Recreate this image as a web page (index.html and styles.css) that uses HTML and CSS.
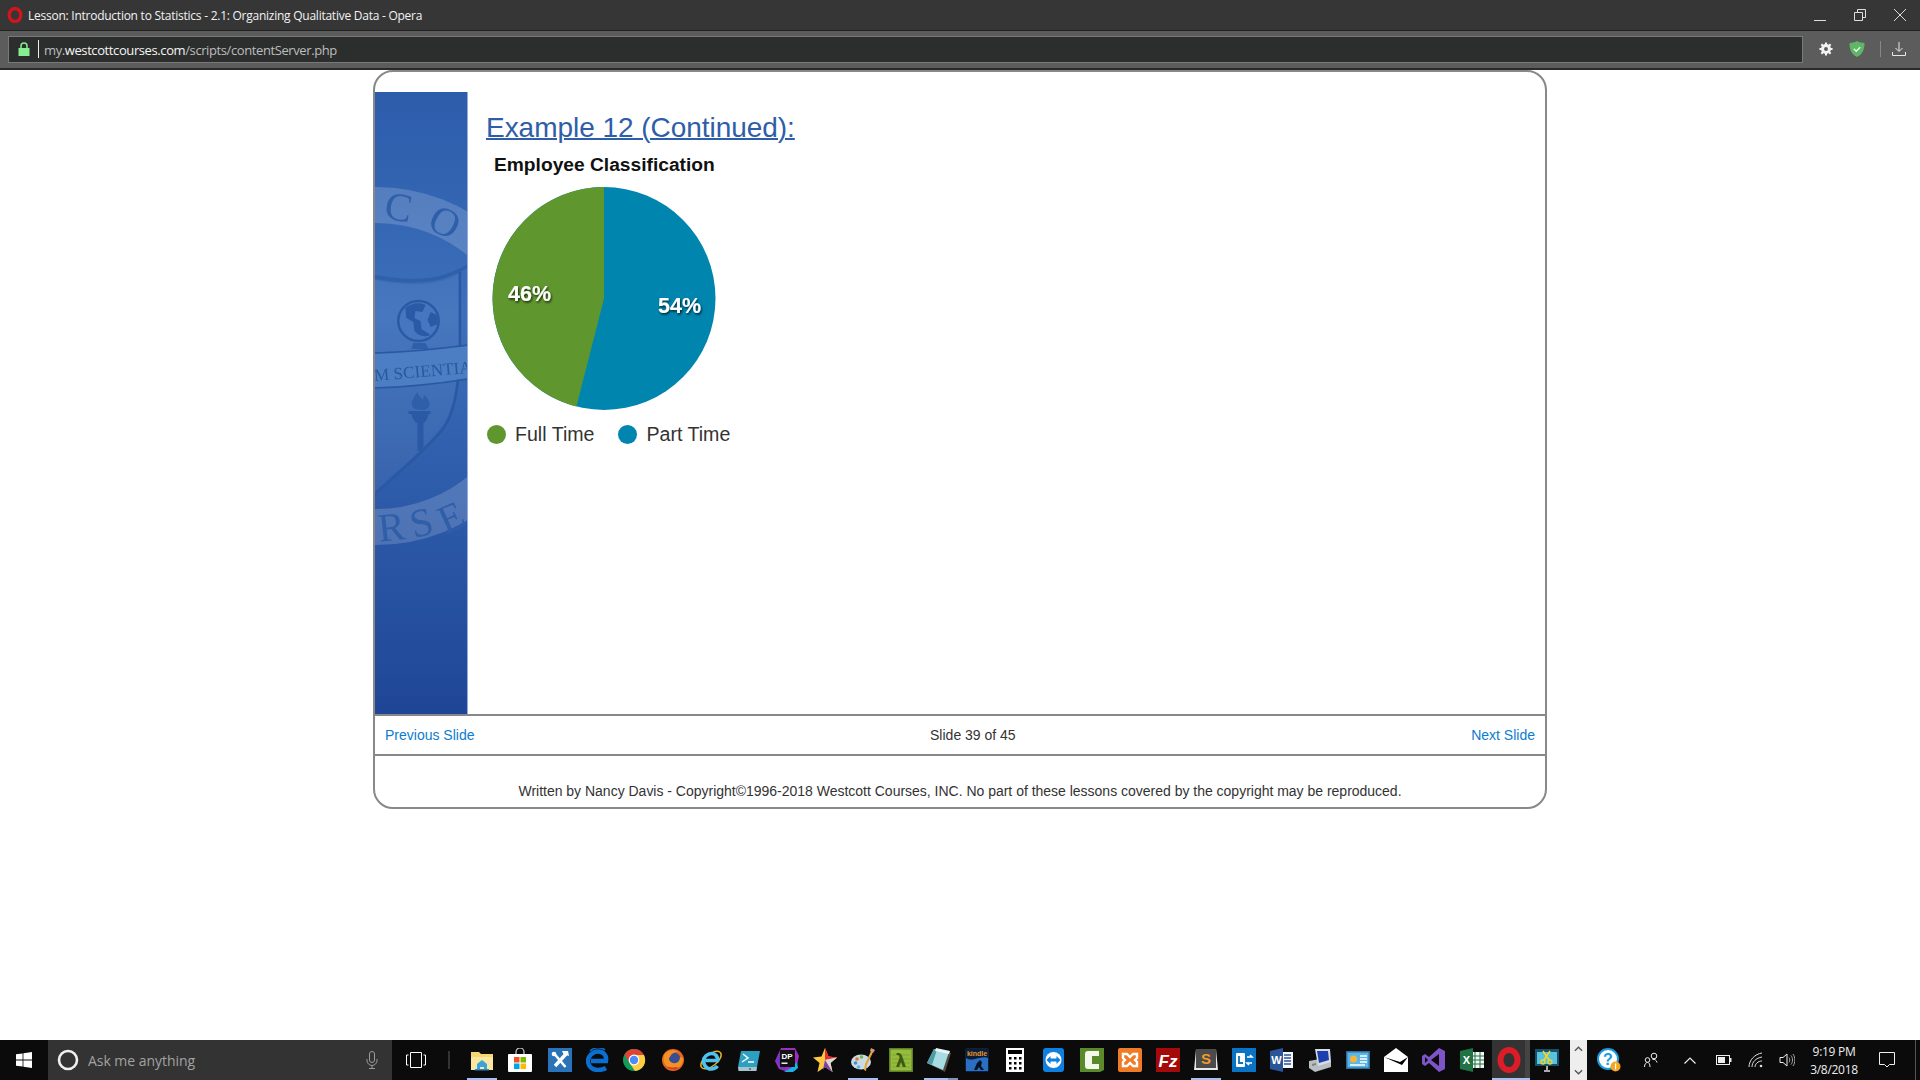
FILE: index.html
```html
<!DOCTYPE html>
<html lang="en">
<head>
<meta charset="utf-8">
<title>Lesson: Introduction to Statistics - 2.1: Organizing Qualitative Data - Opera</title>
<link rel="stylesheet" href="styles.css">
</head>
<body>
<header class="titlebar">
  <svg class="opera-mini" viewBox="0 0 16 16"><ellipse cx="8" cy="8" rx="5.800" ry="6.500" fill="none" stroke="#d3131d" stroke-width="3.400"/></svg>
  <span class="title">Lesson: Introduction to Statistics - 2.1: Organizing Qualitative Data - Opera</span>
  <div class="winctrls">
    <svg viewBox="0 0 12 12"><path d="M0 11.500H12" stroke="#ddd" fill="none"/></svg>
    <svg viewBox="0 0 12 12"><path d="M.5 3.500h8v8h-8zM3.500 3.500v-3h8v8h-3" stroke="#ddd" fill="none"/></svg>
    <svg viewBox="0 0 12 12"><path d="M0 0L12 12M12 0L0 12" stroke="#ddd" fill="none"/></svg>
  </div>
</header>
<div class="addressbar">
  <div class="urlbox">
    <svg class="lock" viewBox="0 0 12 14"><path d="M3 6V4a3 3 0 0 1 6 0v2" fill="none" stroke="#86ee90" stroke-width="1.500"/><rect x="0.500" y="6" width="11" height="8" fill="#86ee90"/></svg>
    <span class="urlsep"></span>
    <span class="url">my.<b>westcottcourses.com</b>/scripts/contentServer.php</span>
  </div>
  <div class="tools">
    <svg class="gear" viewBox="0 0 16 16"><circle cx="8" cy="8" r="4.200" fill="none" stroke="#f2f2f2" stroke-width="3"/><path d="M8 .5v15M.5 8h15M2.700 2.700l10.600 10.600M13.300 2.700L2.700 13.300" stroke="#f2f2f2" stroke-width="2.400"/><circle cx="8" cy="8" r="2.200" fill="#5c5c5c"/></svg>
    <svg class="shield" viewBox="0 0 16 16"><path d="M8 0C5.500 1.500 3 1.800.5 2c0 6 1.500 11 7.500 14 6-3 7.500-8 7.500-14C13 1.800 10.500 1.500 8 0z" fill="#5fb667"/><path d="M4.800 7.800l2.400 2.400 4-4" stroke="#eafbe9" stroke-width="1.400" fill="none"/></svg>
    <span class="toolsep"></span>
    <svg class="dl" viewBox="0 0 14 14"><path d="M7 0v9M3.500 6l3.500 3.500L10.500 6M.5 10v3.500h13V10" fill="none" stroke="#e8e8e8"/></svg>
  </div>
</div>

<main class="page">
  <section class="card">
    <div class="body">
      <aside class="side">
        <svg class="seal" viewBox="0 0 92 622" preserveAspectRatio="none">
          <defs>
            <linearGradient id="sideg" x1="0" y1="0" x2="0" y2="1">
              <stop offset="0" stop-color="#2d5cab"/>
              <stop offset=".14" stop-color="#3163b1"/>
              <stop offset=".36" stop-color="#3d70ba"/>
              <stop offset=".62" stop-color="#2e5dab"/>
              <stop offset="1" stop-color="#1f4696"/>
            </linearGradient>
            <clipPath id="sideclip"><rect width="92" height="622"/></clipPath>
            <filter id="soft" x="-5%" y="-5%" width="110%" height="110%"><feGaussianBlur stdDeviation=".45"/></filter>
          </defs>
          <rect width="92" height="622" fill="url(#sideg)"/>
          <g clip-path="url(#sideclip)"><g filter="url(#soft)">
            <circle cx="1" cy="274" r="161" fill="none" stroke="#fff" stroke-opacity=".17" stroke-width="36"/>
            <g class="sealtxt">
              <text x="10" y="128" transform="rotate(10 20 115)">C</text>
              <text x="54" y="140" transform="rotate(28 62 130)">O</text>
              <text x="3" y="449" transform="rotate(-6 12 436)">R</text>
              <text x="35" y="445" transform="rotate(-14 42 432)">S</text>
              <text x="63" y="440" transform="rotate(-24 72 426)">E</text>
            </g>
            <path d="M0 183c28 5 55 5 70-1 8-3 15-6 22-10v4c-8 4-15 7-22 10-16 6-44 6-70 1z" fill="#2f5ea8" fill-opacity=".85"/>
            <path d="M0 188c28 6 55 6 72-1l11-5v76c-2 38-6 62-16 75C52 355 22 378 0 400z" fill="#fff" fill-opacity=".05"/>
            <path d="M84 180v80c-1 36-6 62-16 76C52 357 24 380 0 402" fill="none" stroke="#2a58a3" stroke-width="2.500"/>
            <path d="M0 262c32-1 62-4 92-8v32c-30 5-60 8-92 9z" fill="#4b7ec3"/>
            <path d="M0 261c32-1 62-4 92-8M0 296c32-1 62-4 92-9" fill="none" stroke="#2a58a3" stroke-width="1.600"/>
            <text class="motto" x="-1" y="285" transform="rotate(-5 46 280)">M SCIENTIAL</text>
            <circle cx="43" cy="229" r="20" fill="#4476bf" stroke="#2c5aa5" stroke-width="2.500"/>
            <path d="M30 216c6-5 14-6 20-3l-3 7-7-1-1 7 6 3 1 8 9 6c-7 3-13 0-16-4l-1-9-7-4zM55 220l6 3 1 9-7 3-3-7z" fill="#2c5aa5"/>
            <path d="M38 251h12l3 6H36z" fill="#2f5ea8"/>
            <path d="M42 300c-3 5-7 9-5 14 1 3 5 4 9 4s8-2 8-6c0-4-3-5-4-9-2 2-3 3-3 5-1-2-4-4-5-8z" fill="#2f5ea8"/>
            <path d="M33 319h22v3h-2c-1 5-3 8-5 9v28h-6v-28c-3-1-5-4-6-9h-3z" fill="#2c5aa5"/>
          </g></g>
          <rect x="91" width="1" height="622" fill="#94aedb"/>
        </svg>
      </aside>
      <article class="content">
        <h1 class="heading">Example 12 (Continued):</h1>
        <figure class="chart">
          <figcaption class="chart-title">Employee Classification</figcaption>
          <svg class="pie" viewBox="0 0 224 226">
            <defs>
              <filter id="tshadow" x="-20%" y="-20%" width="140%" height="140%"><feDropShadow dx="1" dy="1.500" stdDeviation="1" flood-color="#000" flood-opacity=".75"/></filter>
            </defs>
            <circle cx="112" cy="113.500" r="111.500" fill="#0085af"/>
            <path d="M112 113.500V2A111.500 111.500 0 0 0 84.400 221.500z" fill="#5f962d"/>
            <text class="pct" x="16" y="116" filter="url(#tshadow)">46%</text>
            <text class="pct" x="166" y="128" filter="url(#tshadow)">54%</text>
          </svg>
          <figcaption class="legend">
            <span class="legend-item"><i class="dot dot-green"></i>Full Time</span>
            <span class="legend-item"><i class="dot dot-blue"></i>Part Time</span>
          </figcaption>
        </figure>
      </article>
    </div>
    <nav class="slidenav">
      <a class="navlink" href="#">Previous Slide</a>
      <span>Slide 39 of 45</span>
      <a class="navlink" href="#">Next Slide</a>
    </nav>
    <footer class="copyright">Written by Nancy Davis - Copyright©1996-2018 Westcott Courses, INC. No part of these lessons covered by the copyright may be reproduced.</footer>
  </section>
</main>

<div class="taskbar">
  <div class="start">
    <svg viewBox="0 0 16 16"><path d="M0 2.300L6.600 1.400V7.600H0zM7.400 1.300L16 0V7.600H7.400zM0 8.400H6.600V14.600L0 13.700zM7.400 8.400H16V16L7.400 14.700z" fill="#fff"/></svg>
  </div>
  <div class="search">
    <svg class="cortana" viewBox="0 0 22 22"><circle cx="11" cy="11" r="9" fill="none" stroke="#f0f0f0" stroke-width="2.600"/></svg>
    <span class="ask">Ask me anything</span>
    <svg class="mic" viewBox="0 0 12 18"><rect x="3.500" y=".5" width="5" height="11" rx="2.500" fill="none" stroke="#9a9a9a"/><path d="M1 8v1.500a5 5 0 0 0 10 0V8M6 14.500V17M3 17.500h6" fill="none" stroke="#9a9a9a"/></svg>
  </div>
  <div class="taskview">
    <svg class="tv" viewBox="0 0 20 16"><path d="M4.500 .5h11v15h-11zM2.500 3H.5v10h2M17.500 3h2v10h-2" fill="none" stroke="#fff"/></svg>
    <span class="tbsep"></span>
  </div>
  <div class="apps">
    <div class="app on"><svg viewBox="0 0 24 24"><path d="M1 4h8l2 2h12v16H1z" fill="#f7d774"/><path d="M1 9h22v13H1z" fill="#fbe7a0"/><path d="M7 16l5-4 5 4v6h-3v-3h-4v3H7z" fill="#3aa3dc"/><path d="M5 21h14v1.500H5z" fill="#2a86c4"/></svg></div>
    <div class="app"><svg viewBox="0 0 24 24"><path d="M8 7V4a4 4 0 0 1 8 0v3" fill="none" stroke="#ccc" stroke-width="1.200"/><rect y="6" width="24" height="18" rx="1" fill="#fff"/><rect x="6" y="9" width="5.500" height="5.500" fill="#f25022"/><rect x="12.500" y="9" width="5.500" height="5.500" fill="#7fba00"/><rect x="6" y="15.500" width="5.500" height="5.500" fill="#00a4ef"/><rect x="12.500" y="15.500" width="5.500" height="5.500" fill="#ffb900"/></svg></div>
    <div class="app nudge-r"><svg viewBox="0 0 24 24"><rect width="24" height="24" fill="#2a73b8"/><path d="M6.500 6l11 13" stroke="#fff" stroke-width="2.600"/><path d="M18 6L7 18" stroke="#fff" stroke-width="3.400"/><circle cx="6" cy="6" r="2.300" fill="#fff"/><path d="M14 3l6 0 1 5-3-1-2 0z" fill="#fff"/></svg></div>
    <div class="app nudge-r"><svg viewBox="0 0 24 24"><path d="M5 13h15c1-6-3-9.500-8-9.500S2 8 2 13c0 6 5 9 10 9 3 0 6-.8 8-2" fill="none" stroke="#0a6fd1" stroke-width="4.400"/><path d="M4 3C8-1 15-1 19 2" fill="none" stroke="#0a6fd1" stroke-width="1.500"/></svg></div>
    <div class="app"><svg viewBox="0 0 24 24"><circle cx="12" cy="12" r="11" fill="#0f9d58"/><path d="M12 7h10a11 11 0 0 1-9 16L7.500 15z" fill="#ffcd40"/><path d="M12 1A11 11 0 0 0 2.500 6.500L7.500 15 12 7h10A11 11 0 0 0 12 1z" fill="#db4437"/><circle cx="12" cy="12" r="5.400" fill="#fff"/><circle cx="12" cy="12" r="4.200" fill="#4c8bf5"/></svg></div>
    <div class="app"><svg viewBox="0 0 24 24"><circle cx="12" cy="12" r="11" fill="#e8651d"/><circle cx="13" cy="11" r="6.500" fill="#3a4d93"/><path d="M3 7c3-5 10-6 14-3-4 0-7 2-8 5-2 1-1 5 3 6 4 1 7-2 7-6l3 1c0 7-4 11-10 11S1 15 3 7z" fill="#f29224"/><path d="M4 18c3 3 9 5 14 2l-3-1c-4 1-8 0-11-1z" fill="#d8402a"/></svg></div>
    <div class="app"><svg viewBox="0 0 24 24"><ellipse cx="12" cy="12" rx="12" ry="6" transform="rotate(-38 12 12)" fill="none" stroke="#e5b320" stroke-width="1.500"/><path d="M6.500 12.500h12c.5-4-2-7-6-7S4.500 9 4.500 13s3 8 7.500 8c3 0 5-1 6.500-3" fill="none" stroke="#4fc3f0" stroke-width="3.600"/></svg></div>
    <div class="app"><svg viewBox="0 0 24 24"><path d="M4 3h19l-3 16H1z" fill="#2d9fc0"/><path d="M1 19h19l-.5 4H1.500z" fill="#a7c4cc"/><path d="M6 6l5 4-6 4M11 14h6" fill="none" stroke="#fff" stroke-width="1.400"/><circle cx="13" cy="21" r="1" fill="#45666f"/></svg></div>
    <div class="app"><svg viewBox="0 0 24 24"><path d="M6 0h14l4 8-3 14-8 2-9-3-4-8z" fill="#9c2fc0"/><path d="M1 12l6-8 4 18-5-2z" fill="#6a38c8"/><path d="M16 20l6-6 1 6-5 4-9 0z" fill="#17b3e8"/><rect x="5" y="2" width="15" height="17" fill="#111"/><text class="dptxt" x="6.500" y="10.500">DP</text><rect x="6.500" y="14.500" width="6" height="1.400" fill="#fff"/></svg></div>
    <div class="app"><svg viewBox="0 0 24 24"><path d="M12 0l3.500 8.500L24 9.500l-6.500 5.500L19.500 24 12 19l-7.500 5 2-9L0 9.500 8.500 8.500z" fill="#ffc83d"/><path d="M12 0l3.500 8.500L24 9.500 12 12z" fill="#e9293d"/><path d="M24 9.500l-6.500 5.500L19.500 24 12 12z" fill="#d8d8d8"/><path d="M19.500 24L12 19l-2 3 2-10z" fill="#7a3fb0"/></svg></div>
    <div class="app on"><svg viewBox="0 0 24 24"><ellipse cx="10" cy="14" rx="10" ry="7.500" fill="#c9dbe6"/><circle cx="6" cy="11" r="1.800" fill="#e8702a"/><circle cx="10.500" cy="9" r="1.800" fill="#74b74a"/><circle cx="4.500" cy="15" r="1.800" fill="#3d8fd1"/><circle cx="7.500" cy="19" r="1.800" fill="#5db3dd"/><path d="M21 1l2 1-7 15-1 6-2-1 1-6z" fill="#e2a63a"/><path d="M20 0l4 2-2 3-3-2z" fill="#d89a78"/></svg></div>
    <div class="app"><svg viewBox="0 0 24 24"><rect width="24" height="24" fill="#5e7f24"/><rect x="1.500" y="1.500" width="21" height="21" fill="#95bd3c"/><path d="M3 7h18M3 11h18M3 15h18M3 19h18" stroke="#82a833" stroke-width="1.200"/><text class="lam" x="12" y="19" text-anchor="middle">λ</text></svg></div>
    <div class="app on2"><svg viewBox="0 0 24 24"><path d="M8 1l16 4-6 19-16-8z" fill="#6f6a5b" opacity=".7"/><path d="M7 1l15 3-6 18L0 15z" fill="#a7dde2"/><path d="M0 15L7 1l3 .7L5 17z" fill="#4f9aa6"/><path d="M9 0l14 3-1 3L8 3z" fill="#e8f4f6"/></svg></div>
    <div class="app"><svg viewBox="0 0 24 24"><rect width="24" height="24" rx="2" fill="#0b2140"/><rect x="1" y="1" width="22" height="22" rx="1" fill="#0a1c36"/><path d="M1 10c5 3 8 1 13 0s7-1 9 0v13H1z" fill="#2b6fc4"/><path d="M12 15l3-3 2 2-1 4 3 4h-3l-2-3-2 3H9z" fill="#061222"/><text class="kindle" x="12" y="7.500" text-anchor="middle">kindle</text></svg></div>
    <div class="app"><svg viewBox="0 0 24 24"><rect x="3" width="18" height="24" fill="#fff"/><rect x="5" y="2" width="14" height="4" fill="#000"/><g fill="#000"><rect x="6" y="9" width="2.500" height="2.500"/><rect x="11" y="9" width="2.500" height="2.500"/><rect x="16" y="9" width="2.500" height="2.500"/><rect x="6" y="14" width="2.500" height="2.500"/><rect x="11" y="14" width="2.500" height="2.500"/><rect x="16" y="14" width="2.500" height="2.500"/><rect x="6" y="19" width="2.500" height="2.500"/><rect x="11" y="19" width="2.500" height="2.500"/><rect x="16" y="19" width="2.500" height="2.500"/></g></svg></div>
    <div class="app"><svg viewBox="0 0 24 24"><rect x="2" width="21" height="24" rx="3" fill="#0f7fe0"/><circle cx="12.500" cy="12" r="8" fill="#fff"/><path d="M5.500 12l4-4v2.500h6V8l4 4-4 4v-2.500h-6V16z" fill="#0f7fe0"/></svg></div>
    <div class="app"><svg viewBox="0 0 24 24"><path d="M0 0h24v22l-4 2H0z" fill="#5a8a2a"/><path d="M8 3h11v5h-7v8h7v5H8q-3 0-3-3V6q0-3 3-3z" fill="#f4f8ea"/></svg></div>
    <div class="app"><svg viewBox="0 0 24 24"><rect width="24" height="24" rx="2" fill="#ef7b26"/><path d="M5 6h4l3 3 3-3h4v4l-2 2 2 2v4h-4l-3-3-3 3H5v-4l2-2-2-2z" fill="none" stroke="#fff" stroke-width="2.400"/></svg></div>
    <div class="app"><svg viewBox="0 0 24 24"><rect width="24" height="24" fill="#a50a0a"/><text class="fz" x="12" y="19" text-anchor="middle">Fz</text></svg></div>
    <div class="app on"><svg viewBox="0 0 24 24"><path d="M2 1h20l2 21H0z" fill="#e8e8e8"/><rect x="2" y="1" width="20" height="19" fill="#4b4b4b"/><text class="subl" x="12" y="16" text-anchor="middle">S</text></svg></div>
    <div class="app"><svg viewBox="0 0 24 24"><rect width="24" height="24" fill="#0a73c4"/><rect x="4" y="5" width="9" height="14" rx="1" fill="#fff"/><path d="M7 8v7h4" fill="none" stroke="#0a73c4" stroke-width="1.800"/><path d="M15 9h5l-2-2M20 15h-5l2 2" fill="none" stroke="#fff" stroke-width="1.600"/></svg></div>
    <div class="app"><svg viewBox="0 0 24 24"><path d="M10 4h13v16H10z" fill="#f5f7fb"/><path d="M14 7h7M14 10h7M14 13h7M14 16h7" stroke="#2a5699" stroke-width="1.300"/><path d="M0 3l13-3v24L0 21z" fill="#2a5699"/><text class="wd" x="6.500" y="16" text-anchor="middle">W</text></svg></div>
    <div class="app"><svg viewBox="0 0 24 24"><path d="M1 13l16-3 6 4v5L7 24l-6-4z" fill="#b9bec2"/><path d="M7 1l15 0 1 13-13 4z" fill="#d8dde2"/><path d="M9 3h11l1 9-10 3z" fill="#1c3fb0"/><path d="M4 16l4-1v2l-4 1z" fill="#7c8288"/></svg></div>
    <div class="app"><svg viewBox="0 0 24 24"><rect y="3" width="24" height="18" fill="#2d6f9e"/><rect x="1.500" y="4.500" width="21" height="15" fill="#5bb5e8"/><circle cx="7.500" cy="11" r="3.500" fill="#f6b33c"/><path d="M14 8h7M14 11h7M14 14h7M4 17h15" stroke="#fff" stroke-width="1.300"/></svg></div>
    <div class="app"><svg viewBox="0 0 24 24"><path d="M0 9L12 0l12 9v15H0z" fill="#fff"/><path d="M0 9l16 5 8-5-6 8z" fill="#000"/></svg></div>
    <div class="app"><svg viewBox="0 0 24 24"><path d="M17 0l6 3v18l-6 3-10-9-4 3-3-2V8l3-2 4 3z" fill="#7d55c7"/><path d="M17 6v12l-8-6z" fill="#0b0b0b"/><path d="M3 9v6l3-3z" fill="#0b0b0b"/></svg></div>
    <div class="app"><svg viewBox="0 0 24 24"><path d="M10 4h14v16H10z" fill="#f3f7f3"/><path d="M15 4v16M20 4v16M10 8h14M10 12h14M10 16h14" stroke="#217346" stroke-width="1"/><path d="M0 3l13-3v24L0 21z" fill="#217346"/><text class="wd" x="6.500" y="16" text-anchor="middle">X</text></svg></div>
    <div class="app opera nudge-l"><svg viewBox="0 0 24 24"><ellipse cx="12" cy="12" rx="8.500" ry="10" fill="none" stroke="#dc1c26" stroke-width="6"/></svg></div>
    <div class="app nudge-l"><svg viewBox="0 0 24 24"><rect y="1" width="24" height="17" fill="#15506c"/><rect x="2" y="4" width="20" height="12" fill="#58c2e3"/><path d="M9 23h6M12 18v5" stroke="#aaa" stroke-width="2"/><path d="M8 3l6 9M15 3l-6 9" stroke="#f7d51d" stroke-width="1.600"/><circle cx="8" cy="14" r="2" fill="none" stroke="#f7d51d" stroke-width="1.300"/><circle cx="15" cy="14" r="2" fill="none" stroke="#f7d51d" stroke-width="1.300"/></svg></div>
  </div>
  <div class="scroller">
    <svg viewBox="0 0 10 6"><path d="M1 5l4-4 4 4" fill="none" stroke="#555" stroke-width="1.500"/></svg>
    <svg viewBox="0 0 10 6"><path d="M1 1l4 4 4-4" fill="none" stroke="#555" stroke-width="1.500"/></svg>
  </div>
  <div class="tray">
    <div class="tray-cell"><svg class="help" viewBox="0 0 24 24"><circle cx="11" cy="11" r="10" fill="#fff" stroke="#1a9be0" stroke-width="2"/><text class="qm" x="11" y="17" text-anchor="middle">?</text><circle cx="18.500" cy="18.500" r="5" fill="#f5a623"/><rect x="18" y="15.500" width="1.200" height="6" fill="#fff"/></svg></div>
    <div class="tray-cell"><svg class="people" viewBox="0 0 16 16"><circle cx="11" cy="4" r="2.800" fill="none" stroke="#eee"/><circle cx="4.500" cy="8" r="2.300" fill="none" stroke="#eee"/><path d="M7 15c0-3-1-4.500-2.500-4.500S1.500 12 1.500 15M9.500 7.500c2-.5 4 .5 4.500 3" fill="none" stroke="#eee"/></svg></div>
    <div class="tray-cell"><svg class="chev" viewBox="0 0 12 7"><path d="M.5 6.500L6 1l5.500 5.500" fill="none" stroke="#eee" stroke-width="1.200"/></svg></div>
    <div class="tray-cell"><svg class="batt" viewBox="0 0 16 10"><rect x=".5" y=".5" width="13" height="9" fill="none" stroke="#eee"/><rect x="2" y="2" width="7" height="6" fill="#eee"/><rect x="14" y="3" width="1.500" height="4" fill="#eee"/></svg></div>
    <div class="tray-cell"><svg class="wifi" viewBox="0 0 16 16"><path d="M1 15C1 8 7 2 14 1M4 15c0-5 4-9 10-10M7 15c0-3 3-6 7-6" fill="none" stroke="#ddd"/><circle cx="13" cy="14" r="1.300" fill="#ddd"/></svg></div>
    <div class="tray-cell"><svg class="vol" viewBox="0 0 16 16"><path d="M1 5.500h3L8 2v12L4 10.500H1z" fill="none" stroke="#eee"/><path d="M10 5.500c1 1.500 1 3.500 0 5M12 3.500c2 2.500 2 6.500 0 9M14 2c2.500 3.500 2.500 8.500 0 12" fill="none" stroke="#aaa"/></svg></div>
    <div class="clock"><span>9:19 PM</span><span>3/8/2018</span></div>
    <div class="tray-cell"><svg class="notif" viewBox="0 0 16 16"><path d="M.5 .5h15v12h-5L8 15l-2.500-2.500h-5z" fill="none" stroke="#eee"/></svg></div>
    <div class="showdesk"></div>
  </div>
</div>
</body>
</html>
```
FILE: styles.css
```css
* { box-sizing: border-box; }
html, body { margin: 0; height: 100%; }
body {
  display: flex;
  flex-direction: column;
  height: 1080px;
  overflow: hidden;
  background: #fff;
  font-family: "Liberation Sans", Arial, sans-serif;
  color: #333;
}
svg { display: block; }

/* Browser chrome */
.titlebar {
  height: 31px;
  flex: none;
  display: flex;
  align-items: center;
  padding-left: 7px;
  background: #363636;
  border-bottom: 1px solid #222;
}
.opera-mini { width: 16px; height: 16px; margin-right: 5px; }
.title {
  font: 12px "Open Sans", sans-serif;
  letter-spacing: -.25px;
  color: #f2f2f2;
  white-space: nowrap;
}
.winctrls {
  margin-left: auto;
  display: flex;
  gap: 28px;
  padding-right: 14px;
}
.winctrls svg { width: 12px; height: 12px; margin-top: -1px; }

.addressbar {
  height: 39px;
  flex: none;
  display: flex;
  align-items: center;
  padding: 0 0 1px 8px;
  background: #5c5c5c;
  border-bottom: 2px solid #2a2a2a;
}
.urlbox {
  width: 1795px;
  height: 27px;
  display: flex;
  align-items: center;
  padding-left: 9px;
  background: #2c2e2d;
  border: 1px solid #797979;
}
.lock { width: 12px; height: 14px; }
.urlsep { width: 1px; height: 18px; background: #eee; margin: 0 5px 0 8px; }
.url {
  margin-top: 2px;
  font: 13px "Open Sans", sans-serif;
  letter-spacing: -.4px;
  color: #bdbdbd;
  white-space: nowrap;
}
.url b { font-weight: 400; color: #f4f4f4; }
.tools {
  display: flex;
  align-items: center;
  margin-left: 16px;
}
.gear { width: 14px; height: 14px; }
.shield { width: 16px; height: 16px; margin-left: 16px; }
.toolsep { width: 1px; height: 16px; background: #888; margin: 0 11px 0 15px; }
.dl { width: 14px; height: 14px; }

/* Lesson card */
.page {
  flex: 1;
  min-height: 0;
  display: flex;
  justify-content: center;
  align-items: flex-start;
}
.card {
  width: 1174px;
  height: 739px;
  display: flex;
  flex-direction: column;
  border: 2px solid #888;
  border-radius: 20px;
  padding-top: 20px;
  background: #fff;
}
.body { display: flex; height: 622px; flex: none; }
.side { width: 93px; flex: none; }
.seal { width: 93px; height: 622px; }
.sealtxt text {
  font: 40px "Liberation Serif", serif;
  fill: #2f5ea8;
}
.motto {
  font: 17px "Liberation Serif", serif;
  fill: #2a599f;
}
.content { padding: 18px 0 0 18px; }
.heading {
  margin: 0;
  font: 400 28px/36px "Liberation Sans", sans-serif;
  letter-spacing: -.04px;
  color: #2f5ea8;
  text-decoration: underline;
  text-decoration-thickness: 1.5px;
}
.chart { margin: 7px 0 0 8px; width: 240px; }
.chart-title {
  font: 700 19.2px/24px "Liberation Sans", sans-serif;
  color: #111;
}
.pie { width: 224px; height: 226px; margin-top: 8px; margin-left: -2px; }
.pct {
  font: 700 21.5px "Liberation Sans", sans-serif;
  fill: #fff;
}
.legend {
  display: flex;
  gap: 24px;
  margin: 11px 0 0 -7px;
  font: 19.6px/24px "Liberation Sans", sans-serif;
  color: #333;
  white-space: nowrap;
}
.legend-item { display: flex; align-items: center; }
.dot { width: 19px; height: 19px; border-radius: 50%; margin-right: 9px; }
.dot-green { background: #5f962d; }
.dot-blue { background: #0085af; }

.slidenav {
  height: 42px;
  flex: none;
  display: flex;
  align-items: center;
  justify-content: space-between;
  padding: 0 10px;
  border-top: 2px solid #888;
  border-bottom: 2px solid #888;
  font-size: 14px;
  color: #333;
}
.navlink { color: #0b7dd0; text-decoration: none; }
.copyright {
  flex: 1;
  display: flex;
  align-items: flex-end;
  justify-content: center;
  padding-bottom: 8px;
  font-size: 14px;
  letter-spacing: -.01px;
  color: #333;
  white-space: nowrap;
}

/* Taskbar */
.taskbar {
  height: 40px;
  flex: none;
  display: flex;
  background: #0b0b0b;
}
.start { width: 48px; flex: none; display: flex; align-items: center; justify-content: center; }
.start svg { width: 16px; height: 16px; }
.search {
  width: 344px;
  flex: none;
  display: flex;
  align-items: center;
  padding-left: 9px;
  background: #333;
}
.cortana { width: 22px; height: 22px; }
.ask {
  margin-left: 9px;
  font: 14px "Open Sans", sans-serif;
  color: #a2a2a2;
  letter-spacing: -.04px;
}
.mic { width: 12px; height: 18px; margin-left: auto; margin-right: 14px; }
.taskview { width: 71px; flex: none; display: flex; align-items: center; }
.tv { width: 20px; height: 16px; margin-left: 14px; }
.tbsep { width: 2px; height: 18px; background: #333; margin-left: 22px; }
.apps { display: flex; flex: none; width: 1107px; }
.app {
  width: 38.1px;
  flex: none;
  position: relative;
  display: flex;
  align-items: center;
  justify-content: center;
}
.app svg { width: 24px; height: 24px; }
.nudge-r svg { margin-left: 3px; }
.nudge-l svg { margin-right: 4px; }
.on::after, .on2::after, .opera::after {
  content: "";
  position: absolute;
  left: 4px;
  right: 4px;
  bottom: 0;
  height: 2px;
  background: #a6bff2;
}
.on2::after { right: 0; background: linear-gradient(90deg, #a6bff2 72%, #7f93bd 72%); }
.opera {
  background: linear-gradient(90deg, #333 88%, #444 88%);
}
.opera::after { left: 0; right: 0; }
.opera svg { width: 24px; height: 28px; }
.dptxt { font: 700 8px "Liberation Sans", sans-serif; fill: #fff; }
.lam { font: 700 17px "DejaVu Sans", sans-serif; fill: #3c5a15; }
.kindle { font: 700 7px "Liberation Sans", sans-serif; fill: #e8982b; }
.fz { font: italic 700 17px "Liberation Sans", sans-serif; fill: #fff; }
.subl { font: 700 15px "Liberation Sans", sans-serif; fill: #f09a2c; }
.wd { font: 700 11px "Liberation Sans", sans-serif; fill: #fff; }
.qm { font: 700 16px "Liberation Sans", sans-serif; fill: #1a9be0; }
.scroller {
  width: 17px;
  flex: none;
  display: flex;
  flex-direction: column;
  justify-content: space-between;
  align-items: center;
  padding: 6px 0 5px;
  background: #eee;
}
.scroller svg { width: 9px; height: 6px; }
.tray {
  flex: 1;
  display: grid;
  grid-template-columns: 43px 42px 36px 32px 31px 31px 64px 42px 1fr;
  color: #eee;
}
.tray-cell { display: flex; align-items: center; justify-content: center; }
.help { width: 24px; height: 24px; }
.people { width: 16px; height: 16px; }
.chev { width: 12px; height: 7px; }
.batt { width: 16px; height: 10px; }
.wifi { width: 16px; height: 16px; }
.vol { width: 16px; height: 16px; }
.notif { width: 16px; height: 16px; }
.clock {
  display: flex;
  flex-direction: column;
  align-items: center;
  justify-content: center;
  gap: 3px;
  font: 12px/15px "Open Sans", sans-serif;
  letter-spacing: -.3px;
  color: #eee;
}
.showdesk { border-right: 1px solid #555; margin-right: 4px; }
```
